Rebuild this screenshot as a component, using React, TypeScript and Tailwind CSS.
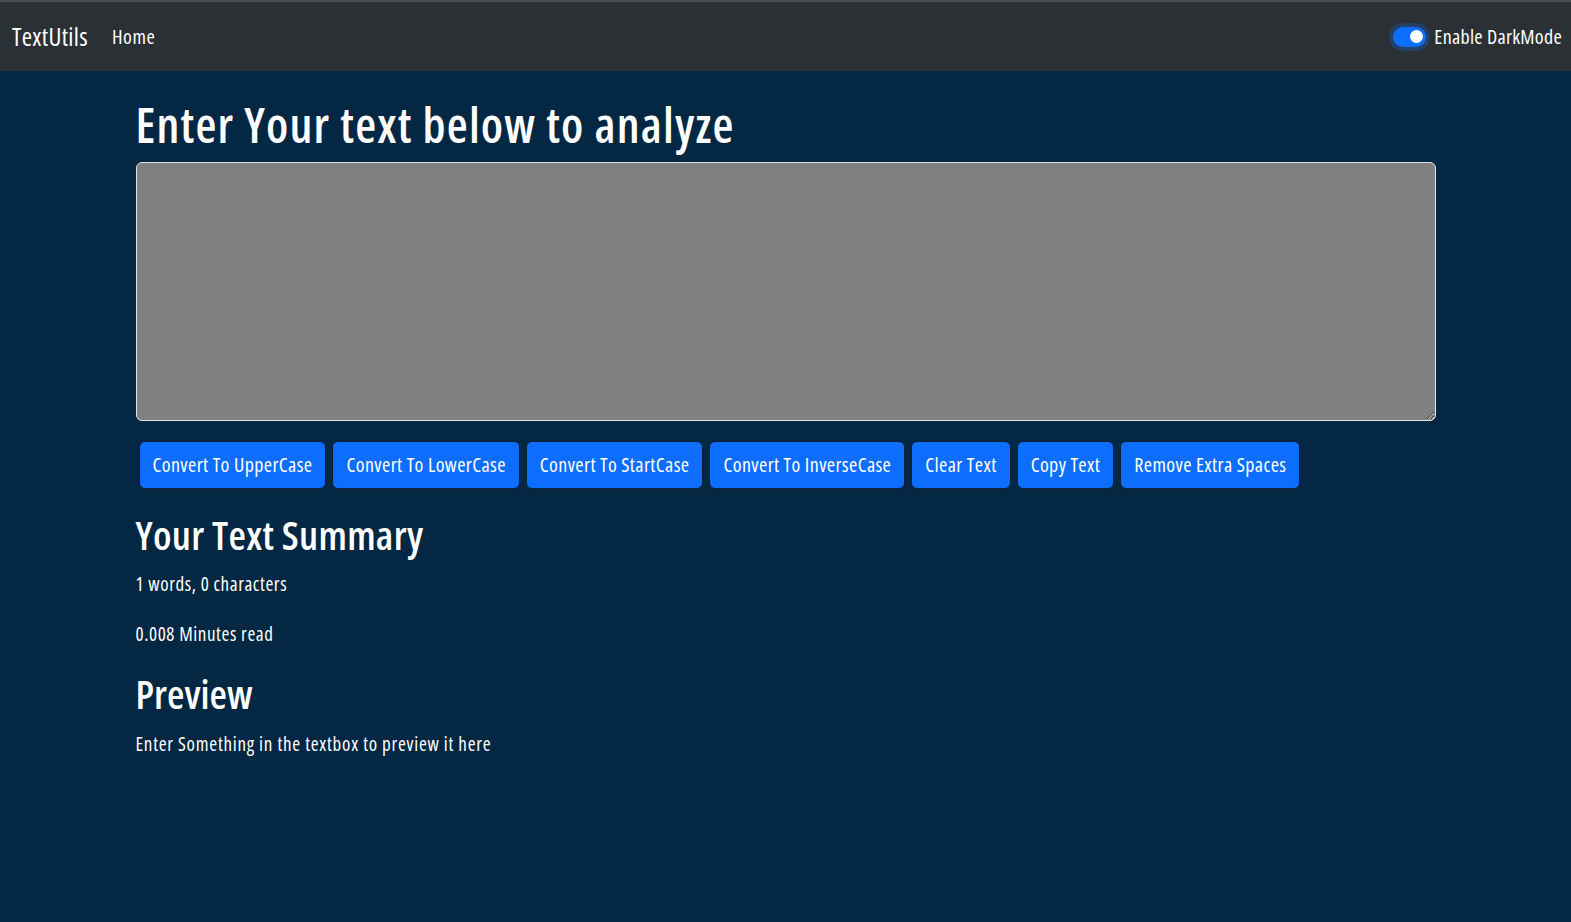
import React from "react";

const buttons = [
  "Convert To UpperCase",
  "Convert To LowerCase",
  "Convert To StartCase",
  "Convert To InverseCase",
  "Clear Text",
  "Copy Text",
  "Remove Extra Spaces",
];

export default function App() {
  return (
    <div className="min-h-screen bg-[#042743] text-white font-['Open_Sans',sans-serif] [font-stretch:75%]">
      <nav className="h-[71px] bg-[#2b3035] border-t-2 border-[#4a4d50] flex items-center pl-3 pr-[9px] tracking-[0.3px]">
        <span className="text-[25px] leading-none mr-6">TextUtils</span>
        <span className="text-[20px] leading-none tracking-[0.6px]">Home</span>
        <div className="ml-auto flex items-center gap-2">
          <div className="w-[33px] h-[20px] rounded-full bg-[#0d6efd] ring-4 ring-[#0d6efd]/25 flex items-center justify-end pr-[3px]">
            <div className="w-[13px] h-[13px] rounded-full bg-white" />
          </div>
          <span className="text-[20px] leading-none">Enable DarkMode</span>
        </div>
      </nav>
      <div className="w-[1300px] mx-auto">
        <h1 className="text-[48px] leading-[1.2] font-semibold mt-[25px] mb-[8px] tracking-[1.2px]">Enter Your text below to analyze</h1>
        <textarea className="block w-full h-[259px] bg-[#808080] border border-[#dee2e6] rounded-[6px] text-white resize-y" />
        <div className="flex gap-[6px] mt-[20px] ml-[3px]">
          {buttons.map((b) => (
            <button key={b} className="h-[48px] px-[13px] bg-[#0d6efd] rounded-[6px] border border-[#0b1e33] text-[20px] text-white whitespace-nowrap tracking-[0.4px]">
              {b}
            </button>
          ))}
        </div>
        <h2 className="text-[40px] leading-[1.2] font-semibold mt-[22px] tracking-[0.3px]">Your Text Summary</h2>
        <p className="text-[19px] mt-[11px] tracking-[0.6px]">1 words, 0 characters</p>
        <p className="text-[19px] mt-[22px] tracking-[0.6px]">0.008 Minutes read</p>
        <h2 className="text-[40px] leading-[1.2] font-semibold mt-[21px]">Preview</h2>
        <p className="text-[19px] mt-[12px] tracking-[0.75px]">Enter Something in the textbox to preview it here</p>
      </div>
    </div>
  );
}
